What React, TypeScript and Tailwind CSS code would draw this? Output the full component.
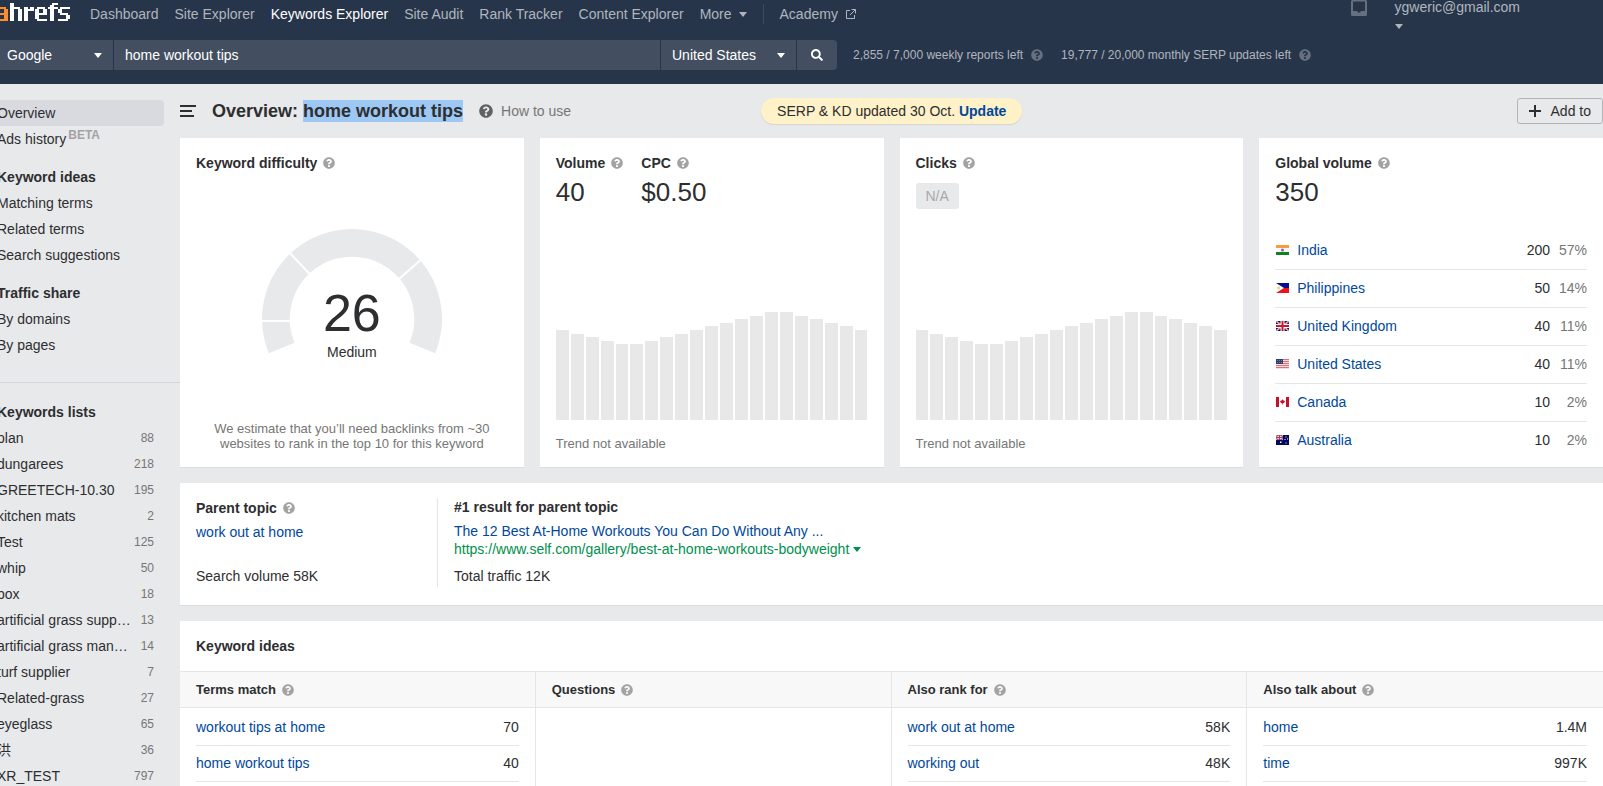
import type { ReactNode } from "react";
import { FaQuestionCircle, FaSearch } from "react-icons/fa";

const LOGO_GLYPHS: { x: number; color: string; rows: string[] }[] = [
  {
    x: -4,
    color: "#ff8b2b",
    rows: ["", "", ".####.", "....##", "....##", ".#####", "##..##", "##..##", ".#####"],
  },
  {
    x: 10,
    color: "#ffffff",
    rows: ["##", "##", "#####.", "##..##", "##..##", "##..##", "##..##", "##..##", "##..##"],
  },
  {
    x: 24,
    color: "#ffffff",
    rows: ["", "", "##.##", "#####", "##", "##", "##", "##", "##"],
  },
  {
    x: 35,
    color: "#ffffff",
    rows: ["", "", ".####.", "##..##", "##..##", "######", "##", "##", ".#####"],
  },
  {
    x: 48,
    color: "#ffffff",
    rows: ["..###", ".##", "#####", ".##", ".##", ".##", ".##", ".##", ".##"],
  },
  {
    x: 58,
    color: "#ffffff",
    rows: ["", "", ".#####", "##", "##", ".####.", "....##", "....##", "#####."],
  },
];

function Logo() {
  return (
    <svg width="70" height="28" viewBox="0 0 70 28" role="img" aria-label="ahrefs" shapeRendering="crispEdges">
      {LOGO_GLYPHS.flatMap((glyph, g) =>
        glyph.rows.flatMap((row, y) =>
          row
            .split("")
            .map((cell, x) =>
              cell === "#" ? (
                <rect key={`${g}-${y}-${x}`} x={glyph.x + x * 2} y={3 + y * 2} width="2" height="2" fill={glyph.color} />
              ) : null,
            ),
        ),
      )}
    </svg>
  );
}

function Caret() {
  return (
    <svg width="8" height="5" viewBox="0 0 8 5" className="shrink-0" fill="currentColor" aria-hidden="true">
      <path d="M0 0h8L4 5z" />
    </svg>
  );
}

function Help() {
  return <FaQuestionCircle className="h-3 w-3 shrink-0 text-[#a3a3a3]" aria-hidden="true" />;
}

function Header() {
  const links = ["Dashboard", "Site Explorer", "Keywords Explorer", "Site Audit", "Rank Tracker", "Content Explorer"];
  return (
    <header className="h-[84px] shrink-0 bg-[#27354b] text-[#b0b5bd]">
      <div className="flex h-10 items-start">
        <a href="#home" className="shrink-0">
          <Logo />
        </a>
        <nav className="ml-5 flex h-7 items-center gap-4">
          {links.map((label) => (
            <a key={label} href="#nav" className={label === "Keywords Explorer" ? "text-white" : ""}>
              {label}
            </a>
          ))}
          <button type="button" className="flex items-center gap-[7px]">
            More <Caret />
          </button>
          <span className="h-5 w-px bg-[#3d4a5e]" />
          <a href="#academy" className="flex items-center gap-2">
            Academy
            <svg width="10" height="10" viewBox="0 0 10 10" fill="none" stroke="currentColor" aria-hidden="true">
              <path d="M4 1.5H.5v8h8V6M5.500 .5h4v4M9.500 .5L4 6" />
            </svg>
          </a>
        </nav>
        <div className="ml-auto flex items-start gap-7 pr-[83px]">
          <button type="button" aria-label="Inbox">
            <svg width="16" height="16" viewBox="0 0 16 16" fill="#667080">
              <path
                fillRule="evenodd"
                d="M1.500 0h13A1.500 1.500 0 0 1 16 1.500v13a1.500 1.500 0 0 1-1.500 1.500h-13A1.500 1.500 0 0 1 0 14.500v-13A1.500 1.500 0 0 1 1.500 0zM2 1.500V11h4l1 1.500h2L10 11h4V1.500z"
              />
            </svg>
          </button>
          <button type="button" className="flex flex-col items-start gap-[10px] text-left leading-[14px]">
            ygweric@gmail.com
            <Caret />
          </button>
        </div>
      </div>
      <div className="flex h-[30px] items-center">
        <form className="flex h-full w-[837px] gap-px overflow-hidden rounded-r text-white" onSubmit={(e) => e.preventDefault()}>
          <div className="relative w-[113px] bg-[#434f61]">
            <select aria-label="Search engine" className="h-full w-full appearance-none bg-transparent pl-[7px]">
              <option>Google</option>
            </select>
            <span className="pointer-events-none absolute right-[11px] top-[13px]">
              <Caret />
            </span>
          </div>
          <input aria-label="Keyword" defaultValue="home workout tips" className="min-w-0 flex-1 bg-[#434f61] px-[11px] outline-none" />
          <div className="relative w-[135px] bg-[#434f61]">
            <select aria-label="Country" className="h-full w-full appearance-none bg-transparent pl-[11px]">
              <option>United States</option>
            </select>
            <span className="pointer-events-none absolute right-[11px] top-[13px]">
              <Caret />
            </span>
          </div>
          <button type="submit" aria-label="Search" className="flex w-10 items-center justify-center bg-[#434f61]">
            <FaSearch className="h-3 w-3" />
          </button>
        </form>
        <p className="ml-4 flex items-center gap-2 text-[12px]">
          2,855 / 7,000 weekly reports left
          <FaQuestionCircle className="h-3 w-3 text-[#667080]" />
        </p>
        <p className="ml-[18px] flex items-center gap-2 text-[12px]">
          19,777 / 20,000 monthly SERP updates left
          <FaQuestionCircle className="h-3 w-3 text-[#667080]" />
        </p>
      </div>
    </header>
  );
}

const LISTS: [string, number][] = [
  ["plan", 88],
  ["dungarees", 218],
  ["GREETECH-10.30", 195],
  ["kitchen mats", 2],
  ["Test", 125],
  ["whip", 50],
  ["box", 18],
  ["artificial grass supp…", 13],
  ["artificial grass man…", 14],
  ["turf supplier", 7],
  ["Related-grass", 27],
  ["eyeglass", 65],
  ["洪", 36],
  ["XR_TEST", 797],
];

function SideGroup({ title, items }: { title: string; items: string[] }) {
  return (
    <section className="mt-3">
      <h2 className="px-[13px] font-bold">{title}</h2>
      {items.map((item) => (
        <a key={item} href="#section" className="block px-[13px]">
          {item}
        </a>
      ))}
    </section>
  );
}

function Sidebar() {
  return (
    <aside className="-ml-4 w-[196px] shrink-0 pt-4 leading-[26px]">
      <a href="#overview" className="mr-4 block rounded bg-[#d9dae0] px-[13px]">
        Overview
      </a>
      <a href="#ads" className="flex px-[13px]">
        Ads history
        <span className="ml-[2px] text-[12px] font-bold leading-[18px] text-[#a3a3a3]">BETA</span>
      </a>
      <SideGroup title="Keyword ideas" items={["Matching terms", "Related terms", "Search suggestions"]} />
      <SideGroup title="Traffic share" items={["By domains", "By pages"]} />
      <section className="mt-6 border-t border-[#d4d5da] pt-4">
        <h2 className="px-[13px] font-bold">Keywords lists</h2>
        {LISTS.map(([name, count]) => (
          <a key={name} href="#list" className="flex justify-between pl-[13px] pr-[26px]">
            <span>{name}</span>
            <span className="text-[12px] text-[#767676]">{count}</span>
          </a>
        ))}
      </section>
    </aside>
  );
}

function TitleRow() {
  return (
    <div className="flex h-[54px] items-center">
      <button type="button" aria-label="Toggle sidebar">
        <svg width="16" height="12" viewBox="0 0 16 12" fill="#2d2e30">
          <path d="M0 0h16v2H0zM0 5h12v2H0zM0 10h14v2H0z" />
        </svg>
      </button>
      <h1 className="ml-4 text-[18px] font-bold leading-[22px]">
        Overview: <mark className="inline-block bg-[#9dc8f3] text-inherit">home workout tips</mark>
      </h1>
      <a href="#help" className="ml-4 flex items-center gap-2 text-[#767676]">
        <FaQuestionCircle className="h-[14px] w-[14px] text-[#606163]" />
        How to use
      </a>
      <p className="ml-[190px] rounded-full bg-[#fff1c8] px-4 leading-[26px] shadow-[0_1px_1px_#d5d3ca]">
        SERP &amp; KD updated 30 Oct.{" "}
        <a href="#update" className="font-bold text-[#00489c]">
          Update
        </a>
      </p>
      <button type="button" className="ml-auto flex h-[26px] items-center gap-[10px] rounded-[3px] border border-[#b3b4b7] px-[11px]">
        <svg width="12" height="12" viewBox="0 0 12 12" fill="#2d2e30" aria-hidden="true">
          <path d="M5 0h2v5h5v2H7v5H5V7H0V5h5z" />
        </svg>
        Add to
      </button>
    </div>
  );
}

function Card({ className = "", children }: { className?: string; children: ReactNode }) {
  return <section className={`flex flex-col border-b border-[#dcdde0] bg-white ${className}`}>{children}</section>;
}

function Label({ children }: { children: ReactNode }) {
  return (
    <h2 className="flex items-center gap-[6px] font-bold leading-[18px]">
      {children}
      <Help />
    </h2>
  );
}

function Gauge() {
  return (
    <div className="relative mx-auto mt-[57px]">
      <svg width="180" height="126" viewBox="-90 -90 180 126" role="img" aria-label="Keyword difficulty 26">
        <path d="M-83.200 34.300A90 90 0 1 1 83.200 34.300L57.600 23.700A62.300 62.300 0 1 0 -57.600 23.700z" fill="#e8e9eb" />
        <path d="M-92 2H-60M-62.400 -66.300L-42 -44.600M70 -60.200L46.500 -39.500" stroke="#fff" strokeWidth="2" />
      </svg>
      <div className="absolute inset-x-0 top-[58px] text-center">
        <div className="text-[52px] leading-[52px]">26</div>
        <div className="mt-1 leading-[18px]">Medium</div>
      </div>
    </div>
  );
}

const TREND = [90, 86, 83, 79, 76, 76, 79, 83, 86, 90, 94, 97, 101, 104, 108, 108, 104, 101, 97, 94, 90];

function Trend() {
  return (
    <div className="mt-auto">
      <div className="flex items-end gap-[2px]">
        {TREND.map((height, i) => (
          <span key={i} className="flex-1 bg-[#e8e8e8]" style={{ height }} />
        ))}
      </div>
      <p className="mt-4 text-[13px] leading-[15px] text-[#767676]">Trend not available</p>
    </div>
  );
}

const STAR_COLUMNS = [1, 3, 5];

function Flag({ code }: { code: string }) {
  return (
    <svg width="13" height="10" viewBox="0 0 13 10" aria-hidden="true" className="block">
      {code === "in" && (
        <>
          <path fill="#ff9a3c" d="M0 0h13v3H0z" />
          <path fill="#f7f7f7" d="M0 3h13v4H0z" />
          <path fill="#128022" d="M0 7h13v3H0z" />
          <circle cx="6.500" cy="5" r="1.500" fill="#6b6fb8" />
        </>
      )}
      {code === "ph" && (
        <>
          <path fill="#00108f" d="M0 0h13v5H0z" />
          <path fill="#f0101c" d="M0 5h13v5H0z" />
          <path fill="#fff" d="M0 0l8 5-8 5z" />
          <circle cx="2.600" cy="5" r="1.400" fill="#f6c877" />
        </>
      )}
      {code === "gb" && (
        <>
          <path fill="#0a1560" d="M0 0h13v10H0z" />
          <path stroke="#fff" strokeWidth="1.400" d="M0 0l13 10M13 0L0 10" />
          <path stroke="#d0142c" strokeWidth=".6" d="M0 0l13 10M13 0L0 10" />
          <path fill="#fff" d="M4.500 0h4v10h-4zM0 3h13v4H0z" />
          <path fill="#d0142c" d="M5.500 0h2v10h-2zM0 4h13v2H0z" />
        </>
      )}
      {code === "us" && (
        <>
          <path fill="#f6dcdf" d="M0 0h13v10H0z" />
          <path fill="#d9707c" d="M0 0h13v1H0zM0 2h13v1H0zM0 4h13v1H0zM0 6h13v1H0zM0 8h13v1H0z" />
          <path fill="#2c3f6b" d="M0 0h7v5H0z" />
          {STAR_COLUMNS.map((x) => (
            <path key={x} fill="#6f7da0" d={`M${x} 1h1v1h-1zM${x} 3h1v1h-1z`} />
          ))}
        </>
      )}
      {code === "ca" && (
        <>
          <path fill="#fff" d="M0 0h13v10H0z" />
          <path fill="#c8102e" d="M0 0h3v10H0zM10 0h3v10h-3zM6.500 2.200l.9 1.300 1.600.6-.6 1.500-1.400.8h-1L4.600 5.600 4 4.100l1.600-.6zM6.200 6h.6v1.500h-.6z" />
        </>
      )}
      {code === "au" && (
        <>
          <path fill="#05075c" d="M0 0h13v10H0z" />
          <path stroke="#fff" strokeWidth=".8" d="M0 0l7 5M7 0L0 5" />
          <path fill="#fff" d="M2.500 0h2v5h-2zM0 1.500h7v2H0z" />
          <path fill="#e0243c" d="M3 0h1v5H3zM0 2h7v1H0z" />
          <path fill="#fff" d="M4 6.500h1.500V8H4zM9.500 1.500h1v1h-1zM8.500 4h1v1h-1zM11 3.500h1v1h-1zM9.500 7.500h1v1h-1z" />
        </>
      )}
    </svg>
  );
}

const COUNTRIES: [string, string, string, string][] = [
  ["in", "India", "200", "57%"],
  ["ph", "Philippines", "50", "14%"],
  ["gb", "United Kingdom", "40", "11%"],
  ["us", "United States", "40", "11%"],
  ["ca", "Canada", "10", "2%"],
  ["au", "Australia", "10", "2%"],
];

function Metrics() {
  return (
    <div className="grid grid-cols-4 gap-4">
      <Card className="px-4 pb-4 pt-4">
        <Label>Keyword difficulty</Label>
        <Gauge />
        <p className="mt-auto text-center text-[13px] leading-[15px] text-[#767676]">
          We estimate that you’ll need backlinks from ~30
          <br />
          websites to rank in the top 10 for this keyword
        </p>
      </Card>
      <Card className="px-4 pb-4 pt-4">
        <div className="flex gap-[18px]">
          <div>
            <Label>Volume</Label>
            <p className="mt-1 text-[26px] leading-8">40</p>
          </div>
          <div>
            <Label>CPC</Label>
            <p className="mt-1 text-[26px] leading-8">$0.50</p>
          </div>
        </div>
        <Trend />
      </Card>
      <Card className="px-4 pb-4 pt-4">
        <Label>Clicks</Label>
        <span className="mt-[11px] self-start rounded-[3px] bg-[#e8e9eb] px-[10px] leading-[26px] text-[#a8a8a8]">N/A</span>
        <Trend />
      </Card>
      <Card className="px-4 pb-2 pt-4">
        <Label>Global volume</Label>
        <p className="mt-1 text-[26px] leading-8">350</p>
        <table className="mt-[23px] w-full">
          <tbody>
            {COUNTRIES.map(([code, name, volume, share]) => (
              <tr key={code} className="h-[38px] border-b border-[#e5e6e8] last:border-b-0">
                <td className="w-[22px] p-0 pl-px">
                  <Flag code={code} />
                </td>
                <td className="p-0">
                  <a href="#country" className="text-[#00489c]">
                    {name}
                  </a>
                </td>
                <td className="p-0 text-right">{volume}</td>
                <td className="w-[37px] p-0 text-right text-[#767676]">{share}</td>
              </tr>
            ))}
          </tbody>
        </table>
      </Card>
    </div>
  );
}

function ParentTopic() {
  return (
    <section className="mt-[15px] flex border-b border-[#dcdde0] bg-white px-4 pb-[18px] pt-[15px] leading-[18px]">
      <div className="w-[242px] border-r border-[#e5e6e8]">
        <h2 className="mt-px flex items-center gap-[6px] font-bold">
          Parent topic <Help />
        </h2>
        <a href="#parent" className="mt-[6px] block text-[#00489c]">
          work out at home
        </a>
        <p className="mt-[26px]">Search volume 58K</p>
      </div>
      <div className="pl-4">
        <h2 className="font-bold">#1 result for parent topic</h2>
        <a href="#result" className="mt-[6px] block text-[#00489c]">
          The 12 Best At-Home Workouts You Can Do Without Any ...
        </a>
        <a href="#url" className="flex items-center gap-1 text-[#008f4c]">
          https://www.self.com/gallery/best-at-home-workouts-bodyweight
          <Caret />
        </a>
        <p className="mb-[2px] mt-[9px]">Total traffic 12K</p>
      </div>
    </section>
  );
}

const IDEAS: { title: string; rows: [string, string][] }[] = [
  { title: "Terms match", rows: [["workout tips at home", "70"], ["home workout tips", "40"]] },
  { title: "Questions", rows: [] },
  { title: "Also rank for", rows: [["work out at home", "58K"], ["working out", "48K"]] },
  { title: "Also talk about", rows: [["home", "1.4M"], ["time", "997K"]] },
];

function KeywordIdeas() {
  return (
    <section className="mt-[15px] flex flex-1 flex-col bg-white">
      <h2 className="px-4 font-bold leading-[50px]">Keyword ideas</h2>
      <div className="grid flex-1 grid-cols-4">
        {IDEAS.map(({ title, rows }) => (
          <div key={title} className="border-r border-[#e5e6e8] last:border-r-0">
            <h3 className="flex h-[37px] items-center gap-[6px] border-y border-[#e5e6e8] bg-[#f8f8f8] px-4 text-[13px] font-bold">
              {title}
              <Help />
            </h3>
            <div className="px-4 pt-px">
              <table className="w-full">
                <tbody>
                  {rows.map(([term, volume]) => (
                    <tr key={term} className="h-9 border-b border-[#e5e6e8]">
                      <td className="p-0">
                        <a href="#term" className="text-[#00489c]">
                          {term}
                        </a>
                      </td>
                      <td className="p-0 text-right">{volume}</td>
                    </tr>
                  ))}
                </tbody>
              </table>
            </div>
          </div>
        ))}
      </div>
    </section>
  );
}

export default function App() {
  return (
    <div className="flex h-screen flex-col overflow-hidden bg-[#e8e9eb] font-['Liberation_Sans','Noto_Sans_CJK_SC',sans-serif] text-[14px] leading-[18px] text-[#2d2e30]">
      <Header />
      <div className="flex min-h-0 flex-1">
        <Sidebar />
        <main className="flex min-w-0 flex-1 flex-col">
          <TitleRow />
          <Metrics />
          <ParentTopic />
          <KeywordIdeas />
        </main>
      </div>
    </div>
  );
}
